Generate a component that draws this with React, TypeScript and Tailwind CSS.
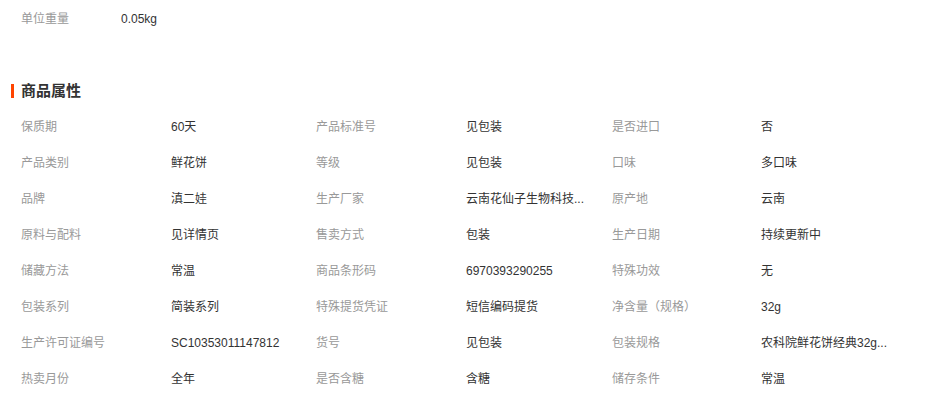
const attrs: [string, string][] = [
  ["保质期", "60天"],
  ["产品标准号", "见包装"],
  ["是否进口", "否"],
  ["产品类别", "鲜花饼"],
  ["等级", "见包装"],
  ["口味", "多口味"],
  ["品牌", "滇二娃"],
  ["生产厂家", "云南花仙子生物科技..."],
  ["原产地", "云南"],
  ["原料与配料", "见详情页"],
  ["售卖方式", "包装"],
  ["生产日期", "持续更新中"],
  ["储藏方法", "常温"],
  ["商品条形码", "6970393290255"],
  ["特殊功效", "无"],
  ["包装系列", "简装系列"],
  ["特殊提货凭证", "短信编码提货"],
  ["净含量（规格）", "32g"],
  ["生产许可证编号", "SC10353011147812"],
  ["货号", "见包装"],
  ["包装规格", "农科院鲜花饼经典32g..."],
  ["热卖月份", "全年"],
  ["是否含糖", "含糖"],
  ["储存条件", "常温"],
];

export default function App() {
  return (
    <div
      className="w-[932px] h-[397px] overflow-hidden bg-white text-[12px]"
      style={{ fontFamily: '"Liberation Sans", "Noto Sans CJK SC", sans-serif' }}
    >
      {/* Unit weight */}
      <div className="flex items-center h-[36px] pl-[21px] pt-[2px]">
        <span className="w-[100px] text-[#999]">单位重量</span>
        <span className="text-[#333]">0.05kg</span>
      </div>

      {/* Section heading */}
      <div className="flex items-center h-[20px] mt-[45px] mb-[8px] pl-[11px]">
        <span className="w-[3px] h-[14px] bg-[#ff4400] mr-[7px]" />
        <h2 className="text-[15px] font-bold text-[#333] leading-[20px]">商品属性</h2>
      </div>

      {/* Attribute grid */}
      <div className="grid grid-cols-[150px_145px_150px_146px_149px_1fr] pl-[21px]">
        {attrs.map(([label, value]) => (
          <div key={label} className="contents">
            <div className="h-[36px] flex items-center text-[#999] whitespace-nowrap">{label}</div>
            <div className="h-[36px] flex items-center text-[#333] whitespace-nowrap">{value}</div>
          </div>
        ))}
      </div>
    </div>
  );
}
